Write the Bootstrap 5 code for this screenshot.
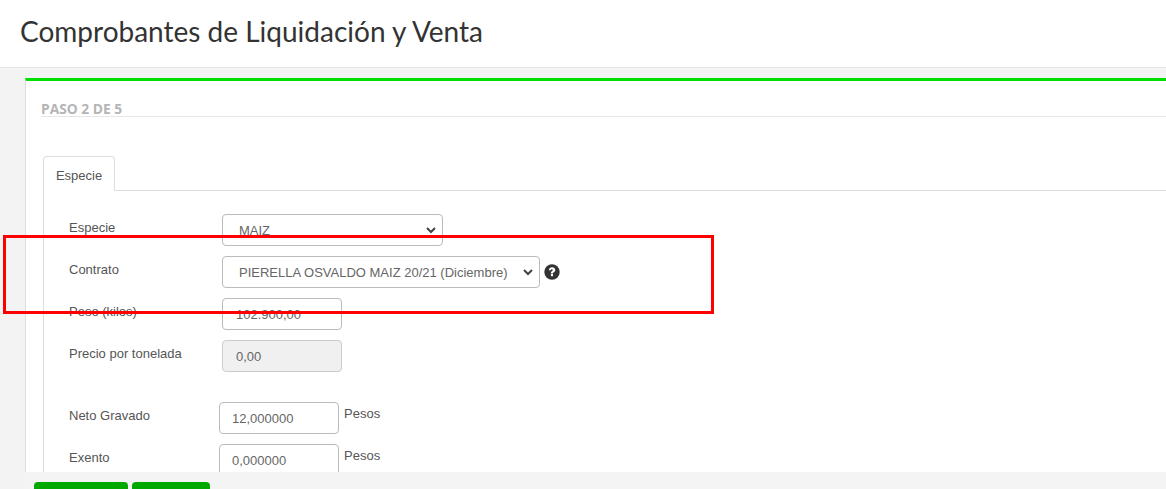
<!DOCTYPE html>
<html lang="es">
<head>
<meta charset="UTF-8">
<title>Comprobantes de Liquidación y Venta</title>
<link href="https://cdn.jsdelivr.net/npm/bootstrap@5.3.0/dist/css/bootstrap.min.css" rel="stylesheet">
<style>
html, body { height: 100%; }
body { background: #f3f3f3; font-family: "Liberation Sans", Arial, sans-serif; font-size: 13px; color: #555; overflow: hidden; position: relative; }
.page-head { height: 68px; background: #fff; border-bottom: 1px solid #e7e7e7; padding-left: 20px; }
.page-head h1 { font-family: Lato, sans-serif; font-size: 28px; font-weight: 400; color: #333; margin: 0; line-height: 62px; }
.work-area { height: 404px; padding: 10px 0 0 25px; overflow: hidden; }
.step-panel { background: #fff; border-top: 3px solid #00e000; border-left: 1px solid #ddd; min-height: 500px; padding: 20px 0 0 15px; }
.step-title { font-family: "Open Sans", sans-serif; font-size: 13.8px; font-weight: 700; color: #b5b5b5; border-bottom: 1px solid #e7e7e7; line-height: 15px; height: 16px; margin: 0; }
.tabs-wrap { margin: 39px 0 0 2px; }
.tabs-wrap .nav-tabs { border-bottom: 1px solid #ddd; }
.tabs-wrap .nav-link, .tabs-wrap .nav-link.active { font-size: 13px; color: #555; height: 35px; width: 72px; padding: 9px 0 0; text-align: center; border: 1px solid #ddd; border-bottom: 0; border-radius: 4px 4px 0 0; background: #fff; margin-bottom: -1px; }
.tab-body { border-left: 1px solid #ddd; padding: 23px 0 0 25px; }
.field-row { height: 32px; margin-bottom: 10px; }
.field-label { width: 153px; font-size: 13px; line-height: 14px; padding-top: 7px; flex: none; color: #555; }
.field-label.narrow { width: 150px; }
.field-select, .field-input { font-size: 13px; color: #666; height: 32px; border: 1px solid #bbb; border-radius: 4px; box-shadow: none; background-color: #fff; }
.field-select { padding: 2px 26px 0 16px; background-size: 10px 8px; background-position: right 6px center; background-image: url("data:image/svg+xml,%3csvg xmlns='http://www.w3.org/2000/svg' viewBox='0 0 10 8'%3e%3cpath fill='none' stroke='%23444' stroke-width='2' d='M1 2l4 4 4-4'/%3e%3c/svg%3e"); }
.select-sm-w { width: 221px; }
.select-lg-w { width: 318px; }
.field-input { width: 120px; padding: 0 13px; }
.narrow + .field-input { padding-left: 12px; }
.field-input:disabled { background: #f0f0f0; border-color: #ccc; }
.gap-row { margin-top: 30px; }
.unit-text { font-size: 13px; padding: 5px 0 0 5px; line-height: 14px; }
.help-mark { margin: 0 0 0 4px; flex: none; }
.action-bar { height: 17px; margin-left: 25px; background: #f3f4f3; padding: 10px 0 0 9px; overflow: hidden; }
.action-btn { background: #00a800; border: 0; border-radius: 4px; height: 30px; display: block; }
.red-mark { position: absolute; left: 3px; top: 235px; width: 711px; height: 79px; border: 3px solid #f00; pointer-events: none; }
</style>
</head>
<body>
<div class="page-head"><h1>Comprobantes de Liquidación y Venta</h1></div>

<div class="work-area">
  <div class="step-panel">
    <p class="step-title">PASO 2 DE 5</p>
    <div class="tabs-wrap">
      <ul class="nav nav-tabs">
        <li class="nav-item"><a class="nav-link active" href="#">Especie</a></li>
      </ul>
      <div class="tab-body">
        <div class="field-row d-flex">
          <div class="field-label">Especie</div>
          <select class="form-select field-select select-sm-w"><option>MAIZ</option></select>
        </div>
        <div class="field-row d-flex align-items-center">
          <div class="field-label align-self-start">Contrato</div>
          <select class="form-select field-select select-lg-w"><option>PIERELLA OSVALDO MAIZ 20/21 (Diciembre)</option></select>
          <svg class="help-mark" width="16" height="16" viewBox="0 0 16 16"><circle cx="8" cy="8" r="7.7" fill="#333"/><path d="M4.9 6.2C5 4.4 6.3 3.2 8.1 3.2c1.8 0 3.2 1.2 3.2 2.7 0 1.3-.9 1.9-1.6 2.4-.5.3-.7.6-.7 1.1H6.9c0-1.1.3-1.7 1.1-2.3.6-.4.9-.7.9-1.1 0-.5-.4-.8-1-.8-.6 0-1 .4-1 1z" fill="#fff"/><rect x="6.9" y="10.1" width="2.1" height="2.1" fill="#fff"/></svg>
        </div>
        <div class="field-row d-flex">
          <div class="field-label">Peso (kilos)</div>
          <input class="form-control field-input" value="102.900,00">
        </div>
        <div class="field-row d-flex">
          <div class="field-label">Precio por tonelada</div>
          <input class="form-control field-input" value="0,00" disabled>
        </div>
        <div class="field-row d-flex gap-row">
          <div class="field-label narrow">Neto Gravado</div>
          <input class="form-control field-input" value="12,000000">
          <span class="unit-text">Pesos</span>
        </div>
        <div class="field-row d-flex">
          <div class="field-label narrow">Exento</div>
          <input class="form-control field-input" value="0,000000">
          <span class="unit-text">Pesos</span>
        </div>
      </div>
    </div>
  </div>
</div>

<div class="action-bar d-flex gap-1">
  <button class="action-btn" style="width:94px"></button>
  <button class="action-btn" style="width:78px"></button>
</div>

<div class="red-mark"></div>
<script src="https://cdn.jsdelivr.net/npm/bootstrap@5.3.0/dist/js/bootstrap.bundle.min.js"></script>
</body>
</html>
